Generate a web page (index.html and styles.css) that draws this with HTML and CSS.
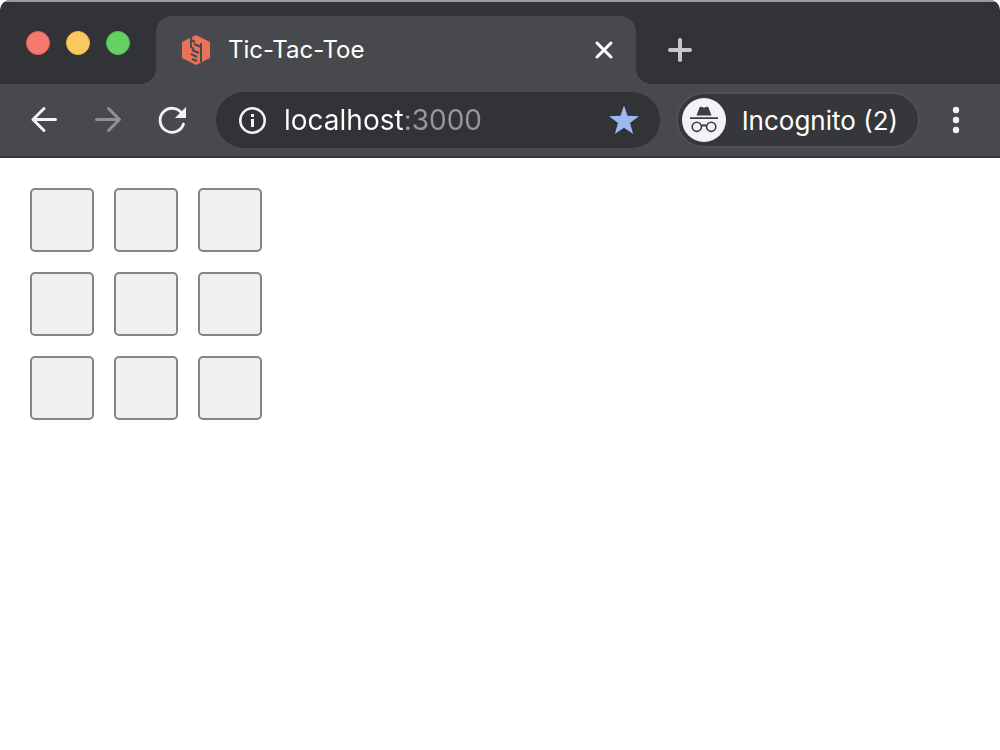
FILE: index.html
```html
<!DOCTYPE html>
<html lang="en">
<head>
<meta charset="utf-8">
<meta name="viewport" content="width=device-width, initial-scale=1">
<title>Tic-Tac-Toe</title>
<link rel="stylesheet" href="styles.css">
</head>
<body>
<div class="browser">
  <header class="tab-strip">
    <div class="window-controls">
      <button class="light light-close" aria-label="Close window"></button>
      <button class="light light-minimize" aria-label="Minimize window"></button>
      <button class="light light-zoom" aria-label="Zoom window"></button>
    </div>
    <div class="tab">
      <svg class="favicon" viewBox="0 0 30 32" aria-hidden="true">
        <path fill="#e97258" d="M15 1 29 8V24L15 31 1 24V8z"/>
        <path fill="none" stroke="#48494c" stroke-width="2" d="M10 2V13L13 15M10 6 14 8M13 10 20 13V9M11 16 18 19M10 20 16 23M11 25 16 27M20 12V28"/>
      </svg>
      <span class="tab-title">Tic-Tac-Toe</span>
      <button class="icon-button" aria-label="Close tab">
        <svg width="20" height="20" viewBox="0 0 20 20"><path d="M3 3 17 17M17 3 3 17" stroke="#fff" stroke-width="3" stroke-linecap="round"/></svg>
      </button>
    </div>
    <button class="icon-button new-tab" aria-label="New tab">
      <svg width="24" height="24" viewBox="0 0 24 24"><path d="M12 2V22M2 12H22" stroke="#c5c7cb" stroke-width="4" stroke-linecap="round"/></svg>
    </button>
  </header>
  <nav class="toolbar" aria-label="Browser toolbar">
    <div class="nav-buttons">
      <button class="icon-button" aria-label="Back">
        <svg width="32" height="32" viewBox="0 0 32 32"><path d="M27.500 15.500H5M16 4.500 5 15.500 16 26.500" fill="none" stroke="#f1f3f4" stroke-width="3" stroke-linejoin="round" stroke-linecap="round"/></svg>
      </button>
      <button class="icon-button" aria-label="Forward">
        <svg width="32" height="32" viewBox="0 0 32 32"><path d="M4.500 15.500H27M16.500 4.500 27.500 15.500 16.500 26.500" fill="none" stroke="#8f9093" stroke-width="3" stroke-linejoin="round" stroke-linecap="round"/></svg>
      </button>
      <button class="icon-button" aria-label="Reload">
        <svg width="32" height="32" viewBox="0 0 32 32"><path d="M27.500 20A12 12 0 1 1 26 9.500" fill="none" stroke="#f1f3f4" stroke-width="2.800" stroke-linecap="round"/><path d="M30 3V14H19z" fill="#f1f3f4"/></svg>
      </button>
    </div>
    <div class="omnibox">
      <button class="icon-button" aria-label="Site information">
        <svg width="28" height="28" viewBox="0 0 28 28"><circle cx="14.500" cy="14.500" r="12.200" fill="none" stroke="#f1f3f4" stroke-width="2.600"/><path d="M14.500 13V21M14.500 8V11" stroke="#f1f3f4" stroke-width="3"/></svg>
      </button>
      <input class="address" type="text" aria-label="Address" value="localhost:3000" spellcheck="false">
      <button class="icon-button" aria-label="Bookmark">
        <svg width="32" height="32" viewBox="0 0 32 32"><path fill="#9ab8f2" d="M16 1.500 19.500 11.800 31 12.200 22 19 25.200 30 16 23.700 6.800 30 10 19 1 12.200 12.500 11.800z"/></svg>
      </button>
    </div>
    <button class="profile">
      <svg width="44" height="44" viewBox="0 0 44 44" aria-hidden="true"><circle cx="22" cy="22" r="22" fill="#f2f3f5"/><path fill="#3c3d40" d="M14.500 17.500 17.500 9.500Q18 8.300 19.300 8.800L22 9.700 24.700 8.800Q26 8.300 26.500 9.500L29.500 17.500zM8 19.200H36V21H8z"/><path d="M19.500 28Q22 26.500 24.500 28" fill="none" stroke="#3c3d40" stroke-width="1.800"/><circle cx="14.800" cy="28.800" r="4.600" fill="none" stroke="#3c3d40" stroke-width="1.600"/><circle cx="29.200" cy="28.800" r="4.600" fill="none" stroke="#3c3d40" stroke-width="1.600"/></svg>
      <span>Incognito (2)</span>
    </button>
    <button class="icon-button menu" aria-label="Menu">
      <svg width="8" height="28" viewBox="0 0 8 28" fill="#f1f3f4"><circle cx="4" cy="4" r="3.200"/><circle cx="4" cy="14" r="3.200"/><circle cx="4" cy="24" r="3.200"/></svg>
    </button>
  </nav>
  <main class="board">
    <button class="square" aria-label="Row 1, column 1"></button>
    <button class="square" aria-label="Row 1, column 2"></button>
    <button class="square" aria-label="Row 1, column 3"></button>
    <button class="square" aria-label="Row 2, column 1"></button>
    <button class="square" aria-label="Row 2, column 2"></button>
    <button class="square" aria-label="Row 2, column 3"></button>
    <button class="square" aria-label="Row 3, column 1"></button>
    <button class="square" aria-label="Row 3, column 2"></button>
    <button class="square" aria-label="Row 3, column 3"></button>
  </main>
</div>
</body>
</html>
```

FILE: styles.css
```css
* {
  box-sizing: border-box;
}

body {
  margin: 0;
  background: #fff;
  font-family: Inter, Roboto, sans-serif;
}

button {
  margin: 0;
  padding: 0;
  border: 0;
  background: none;
  font: inherit;
}

svg {
  display: block;
}

.browser {
  min-height: 100vh;
  border-radius: 10px 10px 0 0;
  overflow: hidden;
}

.tab-strip {
  display: flex;
  height: 84px;
  padding-top: 14px;
  border-top: 2px solid #9a9d9d;
  background: #323337;
}

.window-controls {
  display: flex;
  gap: 16px;
  width: 156px;
  padding: 15px 0 0 26px;
}

.light {
  width: 24px;
  height: 24px;
  border: 1px solid;
  border-radius: 50%;
}

.light-close {
  background: #f4796f;
  border-color: #ec6057;
}

.light-minimize {
  background: #fac860;
  border-color: #f0b94b;
}

.light-zoom {
  background: #66d065;
  border-color: #52c351;
}

.tab {
  position: relative;
  display: flex;
  align-items: center;
  flex: 0 1 480px;
  gap: 17px;
  padding: 0 22px 0 25px;
  border-radius: 16px 16px 0 0;
  background: #48494c;
}

.tab::before,
.tab::after {
  content: "";
  position: absolute;
  bottom: 0;
  width: 16px;
  height: 16px;
}

.tab::before {
  right: 100%;
  background: radial-gradient(circle at 0 0, #323337 16px, #48494c 16px);
}

.tab::after {
  left: 100%;
  background: radial-gradient(circle at 100% 0, #323337 16px, #48494c 16px);
}

.favicon {
  width: 30px;
  height: 32px;
}

.tab-title {
  flex: 1;
  color: #fff;
  font-size: 24px;
  line-height: 32px;
}

.new-tab {
  margin-left: 32px;
}

.toolbar {
  display: flex;
  align-items: center;
  height: 74px;
  padding: 0 40px 0 28px;
  border-bottom: 2px solid #38383b;
  background: #48494c;
}

.nav-buttons {
  display: flex;
  gap: 32px;
  margin-right: 28px;
}

.omnibox {
  display: flex;
  align-items: center;
  flex: 1;
  min-width: 0;
  height: 56px;
  padding: 0 20px 0 22px;
  border-radius: 28px;
  background: #323337;
}

.address {
  flex: 1;
  min-width: 0;
  height: 40px;
  margin-left: 18px;
  padding: 0;
  border: 0;
  outline: 0;
  background: linear-gradient(to right, #fff 120px, #97989b 120px);
  -webkit-background-clip: text;
  background-clip: text;
  color: transparent;
  font-family: Inter, Roboto, sans-serif;
  font-size: 28px;
}

.profile {
  display: flex;
  align-items: center;
  gap: 16px;
  height: 56px;
  margin-left: 16px;
  padding: 0 20px 0 4px;
  border: 2px solid #505155;
  border-radius: 28px;
  background: #36373a;
  color: #fff;
  font-size: 26px;
  white-space: nowrap;
}

.menu {
  margin-left: 32px;
}

.board {
  display: grid;
  grid-template-columns: repeat(3, 64px);
  grid-auto-rows: 64px;
  gap: 20px;
  padding: 30px;
}

.square {
  border: 2px solid #858585;
  border-radius: 5px;
  background: #f0f0f0;
}
```
